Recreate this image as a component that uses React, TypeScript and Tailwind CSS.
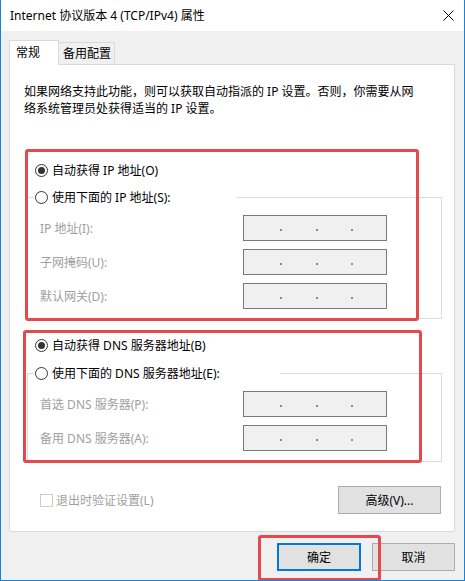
import React from 'react';

function Radio({ checked }: { checked?: boolean }) {
  return (
    <span className="flex h-[13px] w-[13px] shrink-0 items-center justify-center rounded-full border border-[#333333] bg-white">
      {checked && <span className="h-[7px] w-[7px] rounded-full bg-[#333333]" />}
    </span>
  );
}

function IpBox() {
  return (
    <div className="flex h-[26px] w-[144px] items-center border border-[#7a7a7a] bg-[#f0f0f0] pl-[3px]">
      <span className="flex-1" />
      <span className="mt-[3px] h-[2px] w-[2px] bg-[#8a8a8a]" />
      <span className="flex-1" />
      <span className="mt-[3px] h-[2px] w-[2px] bg-[#8a8a8a]" />
      <span className="flex-1" />
      <span className="mt-[3px] h-[2px] w-[2px] bg-[#8a8a8a]" />
      <span className="flex-1" />
    </div>
  );
}

function Field({ label }: { label: string }) {
  return (
    <div className="flex items-center">
      <span className="w-[215px] pl-[12px] text-[#a0a0a0]">{label}</span>
      <IpBox />
    </div>
  );
}

export default function App() {
  return (
    <div className="relative h-[581px] w-[465px] overflow-hidden border-x border-b border-[#1883d7] bg-[#f0f0f0] text-[12px] leading-[17px] text-black font-[family-name:'Noto_Sans','Noto_Sans_CJK_SC',sans-serif]">
      {/* Title bar */}
      <div className="flex h-[31px] items-center justify-between bg-white pl-[9px] pr-[9px]">
        <span>Internet 协议版本 4 (TCP/IPv4) 属性</span>
        <svg width="11" height="11" viewBox="0 0 11 11" className="mr-[1px]">
          <path d="M0.5 0.5L10.5 10.5M10.5 0.5L0.5 10.5" stroke="#000" strokeWidth="1" />
        </svg>
      </div>

      <div className="pl-[8px] pr-[9px]">
        {/* Tabs */}
        <div className="mt-[9px] flex h-[24px] items-end">
          <div className="relative z-10 -mb-px flex h-[25px] w-[50px] items-start border border-b-0 border-[#d9d9d9] bg-white pl-[6px] pt-[3px]">
            常规
          </div>
          <div className="flex h-[22px] w-[56px] items-start border border-b-0 border-l-0 border-[#d9d9d9] bg-[#f0f0f0] pl-[4px] pt-[2px]">
            备用配置
          </div>
        </div>

        {/* Panel */}
        <div className="h-[468px] border border-[#d9d9d9] bg-white">
          <p className="pl-[14px] pt-[18px]">
            如果网络支持此功能，则可以获取自动指派的 IP 设置。否则，你需要从网
            <br />
            络系统管理员处获得适当的 IP 设置。
          </p>

          <label className="mt-[43px] flex h-[20px] items-center gap-[4px] pl-[25px]">
            <Radio checked />
            <span>自动获得 IP 地址(O)</span>
          </label>

          <fieldset className="ml-[17px] mt-[7px] w-[415px] border border-[#dcdcdc] pb-[9px]">
            <legend className="ml-[6px] flex h-[20px] w-[202px] items-center gap-[4px] pl-[1px]">
              <Radio />
              <span>使用下面的 IP 地址(S):</span>
            </legend>
            <div className="mt-[8px] flex flex-col gap-[8px]">
              <Field label="IP 地址(I):" />
              <Field label="子网掩码(U):" />
              <Field label="默认网关(D):" />
            </div>
          </fieldset>

          <label className="mt-[16px] flex h-[20px] items-center gap-[4px] pl-[25px]">
            <Radio checked />
            <span>自动获得 DNS 服务器地址(B)</span>
          </label>

          <fieldset className="ml-[17px] mt-[8px] w-[415px] border border-[#dcdcdc] pb-[10px]">
            <legend className="ml-[6px] flex h-[20px] w-[246px] items-center gap-[4px] pl-[1px]">
              <Radio />
              <span>使用下面的 DNS 服务器地址(E):</span>
            </legend>
            <div className="mt-[8px] flex flex-col gap-[8px]">
              <Field label="首选 DNS 服务器(P):" />
              <Field label="备用 DNS 服务器(A):" />
            </div>
          </fieldset>

          <div className="mt-[24px] flex items-center justify-between pl-[30px] pr-[13px]">
            <div className="flex items-center gap-[3px] text-[#a0a0a0]">
              <span className="h-[13px] w-[13px] border border-[#cccccc] bg-white" />
              <span>退出时验证设置(L)</span>
            </div>
            <button className="flex h-[28px] w-[103px] items-center justify-center border border-[#adadad] bg-[#e1e1e1]">
              高级(V)...
            </button>
          </div>
        </div>

        {/* Dialog buttons */}
        <div className="mt-[11px] flex justify-end gap-[11px]">
          <button className="flex h-[28px] w-[84px] items-center justify-center border-2 border-[#0078d7] bg-[#e1e1e1]">
            确定
          </button>
          <button className="flex h-[28px] w-[83px] items-center justify-center border border-[#adadad] bg-[#e1e1e1]">
            取消
          </button>
        </div>
      </div>

      {/* Red annotation boxes */}
      <div className="pointer-events-none absolute left-[24px] top-[149px] h-[172px] w-[394px] rounded-[3px] border-[3px] border-[#e5494e]" />
      <div className="pointer-events-none absolute left-[22px] top-[330px] h-[133px] w-[399px] rounded-[3px] border-[3px] border-[#e5494e]" />
      <div className="pointer-events-none absolute left-[257px] top-[535px] h-[46px] w-[123px] rounded-[3px] border-[3px] border-[#e5494e]" />
    </div>
  );
}
